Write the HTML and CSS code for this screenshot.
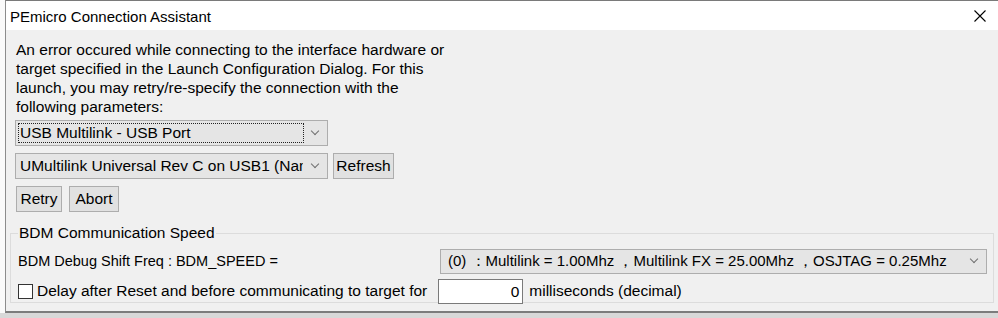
FILE: index.html
```html
<!DOCTYPE html>
<html lang="en">
<head>
    <meta charset="UTF-8">
    <title>PEmicro Connection Assistant</title>
    <link rel="stylesheet" href="styles.css">
</head>
<body>
    <div class="backdrop">
        <div class="dialog">
            <div class="titlebar">
                <span class="title">PEmicro Connection Assistant</span>
                <svg class="close" width="12" height="12" viewBox="0 0 12 12">
                    <path d="M0.5 0.5 L11.5 11.5 M11.5 0.5 L0.5 11.5" stroke="#000" stroke-width="1.1" fill="none"/>
                </svg>
            </div>
            <div class="client">
                <p class="message">An error occured while connecting to the interface hardware or target specified in the Launch Configuration Dialog. For this launch, you may retry/re-specify the connection with the following parameters:</p>

                <div class="row">
                    <div class="combo combo-wide">
                        <span class="combo-text focused">USB Multilink - USB Port</span>
                        <span class="chevron"></span>
                    </div>
                </div>
                <div class="row">
                    <div class="combo combo-wide">
                        <span class="combo-text">UMultilink Universal Rev C on USB1 (Name</span>
                        <span class="chevron"></span>
                    </div>
                    <button class="btn btn-refresh">Refresh</button>
                </div>
                <div class="row row-actions">
                    <button class="btn btn-retry">Retry</button>
                    <button class="btn btn-abort">Abort</button>
                </div>

                <fieldset class="group">
                    <legend>BDM Communication Speed</legend>
                    <div class="group-row">
                        <span class="label speed-label">BDM Debug Shift Freq : BDM_SPEED =</span>
                        <div class="combo combo-speed">
                            <span class="combo-text">(0) ：Multilink = 1.00Mhz ，Multilink FX = 25.00Mhz ，OSJTAG = 0.25Mhz</span>
                            <span class="chevron"></span>
                        </div>
                    </div>
                    <div class="group-row">
                        <span class="check"></span>
                        <span class="label delay-label">Delay after Reset and before communicating to target for</span>
                        <span class="number-input">0</span>
                        <span class="label">milliseconds (decimal)</span>
                    </div>
                </fieldset>
            </div>
        </div>
        <div class="below"></div>
    </div>
</body>
</html>
```

FILE: styles.css
```css
body {
    margin: 0;
    padding: 0;
    background-color: #ffffff;
    font-family: "Liberation Sans", Arial, sans-serif;
    font-size: 15.5px;
    color: #000;
    overflow: hidden;
}

.backdrop {
    width: 998px;
    height: 318px;
    padding-left: 5px;
    box-sizing: border-box;
    background-color: #fafafa;
}

.dialog {
    height: 313px;
    border-left: 1px solid #8c8c8c;
    border-top: 1px solid #7a7a7a;
    border-bottom: 2px solid #7c7c7c;
    box-sizing: border-box;
    background: #f0f0f0;
    display: flex;
    flex-direction: column;
}

.below {
    height: 5px;
    margin-left: -5px;
    background: #d8d8d8;
}

.titlebar {
    height: 29px;
    background: #fff;
    display: flex;
    align-items: center;
    justify-content: space-between;
    padding: 0 12px 0 4px;
}

.title {
    font-size: 15px;
    padding-top: 1px;
}

.client {
    flex: 1;
    padding: 10px 4px 0 10px;
}

.message {
    margin: 0 0 4px 0;
    width: 440px;
    line-height: 19px;
}

.row {
    display: flex;
    gap: 5px;
    margin-bottom: 7px;
}

.row-actions {
    gap: 7px;
}

.combo {
    height: 26px;
    box-sizing: border-box;
    border: 1px solid #adadad;
    background: #e5e5e5;
    display: flex;
    align-items: center;
    padding: 0 3px 0 2px;
    position: relative;
    overflow: hidden;
}

.combo-wide {
    width: 313px;
    margin-left: -1px;
}

.combo-text {
    flex: 1;
    white-space: nowrap;
    overflow: hidden;
    line-height: 18px;
    padding: 0 1px;
    border: 1px dotted transparent;
}

.combo-text.focused {
    border-color: #222;
}

.chevron {
    width: 20px;
    height: 18px;
    flex: none;
    position: relative;
}

.chevron::after {
    content: "";
    position: absolute;
    left: 8px;
    top: 4px;
    width: 5px;
    height: 5px;
    border-right: 1px solid #707070;
    border-bottom: 1px solid #707070;
    transform: rotate(45deg);
}

.btn {
    height: 26px;
    padding: 0;
    border: 1px solid #adadad;
    background: #e1e1e1;
    font-family: inherit;
    font-size: 15.5px;
    color: #000;
}

.btn-refresh {
    width: 61px;
}

.btn-retry {
    width: 46px;
}

.btn-abort {
    width: 50px;
}

.group {
    margin: 12px 0 0 -6px;
    border: 1px solid #dcdcdc;
    padding: 4px 7px 6px 7px;
    height: 79px;
    box-sizing: border-box;
}

.group legend {
    padding: 0 1px;
    margin-left: 0;
    font-size: 15.5px;
}

.group-row {
    display: flex;
    align-items: center;
    height: 30px;
}

.group-row .label {
    white-space: nowrap;
}

.speed-label {
    font-size: 14.5px;
}

.combo-speed {
    margin-left: auto;
    width: 547px;
    margin-right: -1px;
    height: 25px;
}

.combo-speed .combo-text {
    padding-left: 4px;
    font-size: 15px;
}

.check {
    width: 13px;
    height: 13px;
    border: 1px solid #333;
    background: #fff;
    margin-right: 4px;
}

.delay-label {
    margin-right: 11px;
}

.number-input {
    width: 85px;
    height: 25px;
    box-sizing: border-box;
    border: 1px solid #7a7a7a;
    background: #fff;
    text-align: right;
    line-height: 23px;
    padding-right: 3px;
    margin-right: 6px;
}
```
